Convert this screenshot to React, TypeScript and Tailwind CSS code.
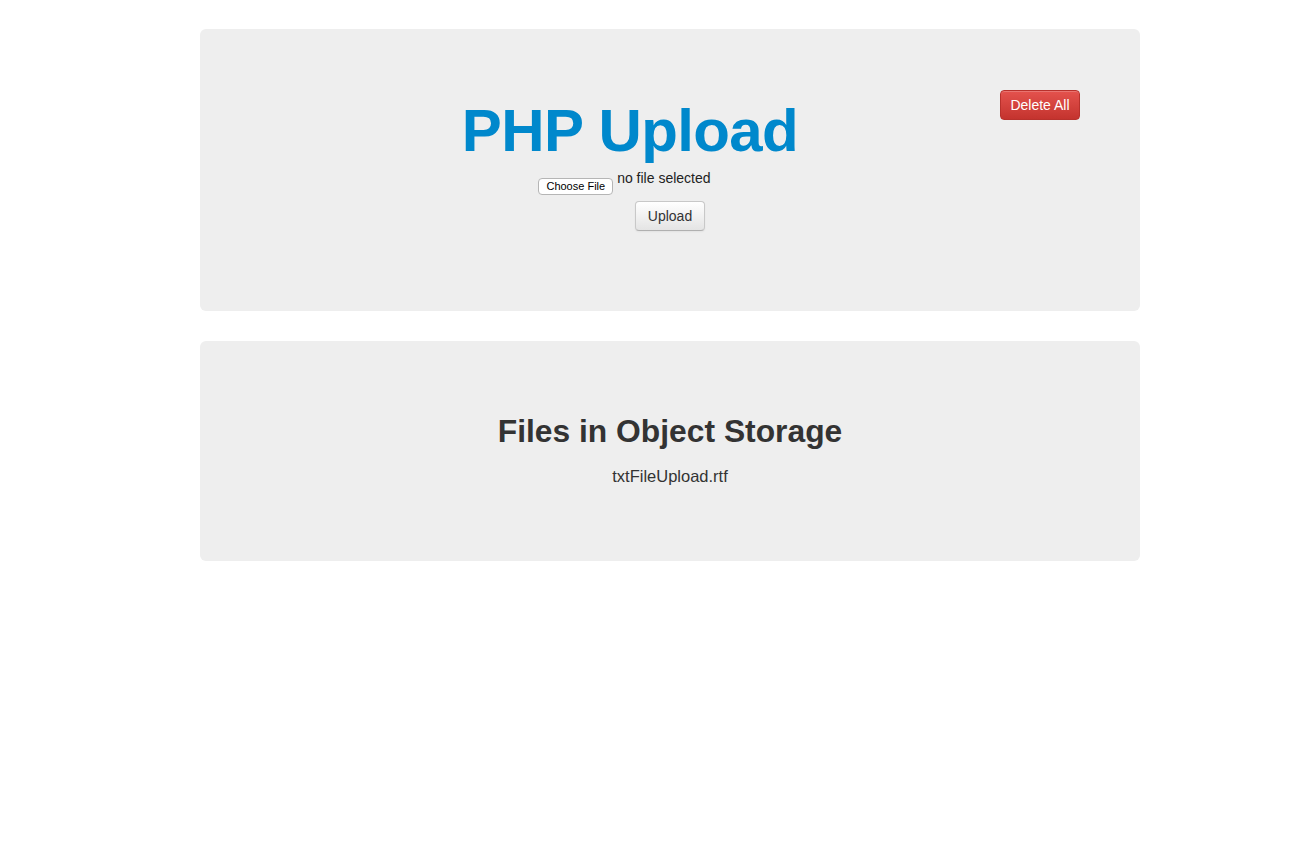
export default function App() {
    return (
        <main className="min-h-screen bg-white pt-[29px] font-['Liberation_Sans',Arial,sans-serif] text-[#333333]">
            <div className="w-[940px] ml-[200px]">
                {/* Upload panel */}
                <section className="bg-[#eeeeee] rounded-[6px] px-[60px] pt-[61px] pb-[80px]">
                    <div className="flex items-start">
                        <div className="flex-1 flex flex-col items-center">
                            <h1 className="mt-[11px] text-[60px] leading-[60px] font-bold tracking-[-0.6px] text-[#0088cc]">
                                PHP Upload
                            </h1>
                            <div className="mt-[6px] flex items-start gap-[4px] pr-[11px]">
                                <button className="mt-[11px] h-[17px] px-[7px] bg-white border border-[#b5b5b5] rounded-[4px] text-[11px] leading-[15px] text-black">
                                    Choose File
                                </button>
                                <span className="mt-[1px] text-[14px] leading-[20px] text-[#222222]">no file selected</span>
                            </div>
                        </div>
                        <button className="w-[80px] h-[30px] rounded-[4px] border border-[#b8312c] bg-gradient-to-b from-[#e4524d] to-[#c4332e] text-white text-[14px] font-light shadow-[inset_0_1px_0_rgba(255,255,255,0.2)]">
                            Delete All
                        </button>
                    </div>
                    <div className="mt-[6px] flex justify-center">
                        <button className="h-[30px] px-[12px] rounded-[4px] border border-[#c8c8c8] border-b-[#b0b0b0] bg-gradient-to-b from-white to-[#e4e4e4] text-[14px] text-[#333333] shadow-[inset_0_1px_0_rgba(255,255,255,0.3),0_1px_2px_rgba(0,0,0,0.05)]">
                            Upload
                        </button>
                    </div>
                </section>

                {/* Files list */}
                <section className="mt-[30px] bg-[#eeeeee] rounded-[6px] px-[60px] pt-[70px] pb-[70px] text-center">
                    <h2 className="text-[31.8px] leading-[40px] font-bold text-[#333333]">Files in Object Storage</h2>
                    <p className="mt-[10px] text-[16.5px] leading-[30px] font-light text-[#333333]">txtFileUpload.rtf</p>
                </section>
            </div>
        </main>
    );
}
